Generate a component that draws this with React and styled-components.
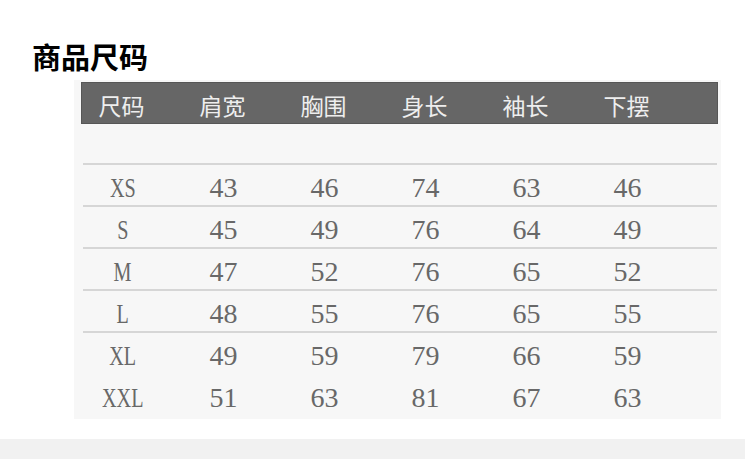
import styled, { createGlobalStyle } from "styled-components";

const GlobalStyle = createGlobalStyle`
  html, body {
    margin: 0;
    padding: 0;
    background: #ffffff;
  }
`;

const Page = styled.div`
  width: 750px;
  height: 466px;
  overflow: hidden;
  background: #ffffff;
`;

const Title = styled.h2`
  margin: 0;
  padding: 36px 0 0 32px;
  height: 40px;
  line-height: 40px;
  font-family: "Noto Sans CJK SC", "Noto Sans", sans-serif;
  font-weight: 700;
  font-size: 29px;
  color: #000000;
`;

const Chart = styled.div`
  margin: 4px 0 0 74px;
  width: 647px;
  height: 339px;
  box-sizing: border-box;
  padding: 2px 3px 0 7px;
  background: #f7f7f7;
`;

const HeaderBar = styled.div`
  height: 42px;
  box-sizing: border-box;
  background: #666666;
  border: 1px solid #565656;
`;

const Spacer = styled.div`
  height: 39px;
`;

const Cells = styled.div`
  display: grid;
  grid-template-columns: repeat(6, 101px);
  margin-left: -11px;
  height: 100%;
  align-items: center;
  justify-items: center;
`;

const HeadCell = styled.span`
  font-family: "Noto Sans CJK SC", "Noto Sans", sans-serif;
  font-size: 23px;
  line-height: 40px;
  padding-top: 2px;
  color: #eeeeee;
`;

const Row = styled.div`
  height: 42px;
  box-sizing: border-box;
  border-top: ${(p) => (p.$ruled ? "2px solid #d6d6d6" : "2px solid transparent")};
  margin: 0 1px 0 2px;
`;

const Cell = styled.span`
  display: inline-block;
  font-family: "Liberation Serif", "Times New Roman", serif;
  font-size: 28px;
  line-height: 36px;
  padding-top: 5px;
  color: #686868;
  transform: ${(p) => (p.$narrow ? "scaleX(0.72)" : "none")};
`;

const BottomBar = styled.div`
  margin-top: 20px;
  width: 745px;
  height: 20px;
  background: #f1f1f1;
`;

const headers = ["尺码", "肩宽", "胸围", "身长", "袖长", "下摆"];

const sizes = [
  ["XS", 43, 46, 74, 63, 46],
  ["S", 45, 49, 76, 64, 49],
  ["M", 47, 52, 76, 65, 52],
  ["L", 48, 55, 76, 65, 55],
  ["XL", 49, 59, 79, 66, 59],
  ["XXL", 51, 63, 81, 67, 63],
];

export default function App() {
  return (
    <Page>
      <GlobalStyle />
      <Title>商品尺码</Title>
      <Chart>
        <HeaderBar>
          <Cells>
            {headers.map((h) => (
              <HeadCell key={h}>{h}</HeadCell>
            ))}
          </Cells>
        </HeaderBar>
        <Spacer />
        {sizes.map((row, i) => (
          <Row key={row[0]} $ruled={i < 5}>
            <Cells>
              {row.map((v, j) => (
                <Cell key={j} $narrow={j === 0}>
                  {v}
                </Cell>
              ))}
            </Cells>
          </Row>
        ))}
      </Chart>
      <BottomBar />
    </Page>
  );
}
